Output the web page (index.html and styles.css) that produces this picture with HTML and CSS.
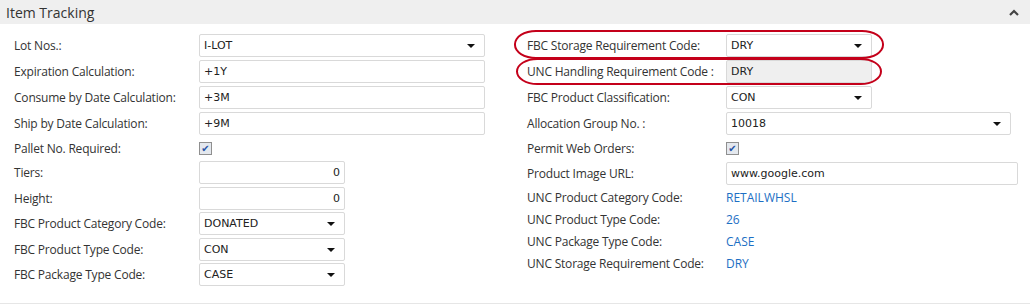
FILE: index.html
```html
<!DOCTYPE html>
<html lang="en">
<head>
    <meta charset="UTF-8">
    <meta name="viewport" content="width=device-width, initial-scale=1.0">
    <title>Item Tracking</title>
    <link rel="stylesheet" href="styles.css">
</head>
<body>
    <div class="panel">
        <div class="panel-header">
            <span class="panel-title">Item Tracking</span>
            <svg class="collapse" width="10" height="7" viewBox="0 0 10 7">
                <path d="M1 6 L5 2 L9 6" fill="none" stroke="#444" stroke-width="2.2"/>
            </svg>
        </div>
        <div class="panel-body">
            <div class="col left">
                <div class="row">
                    <span class="label">Lot Nos.:</span>
                    <div class="field wide select">I-LOT<span class="arrow"></span></div>
                </div>
                <div class="row">
                    <span class="label">Expiration Calculation:</span>
                    <div class="field wide">+1Y</div>
                </div>
                <div class="row">
                    <span class="label">Consume by Date Calculation:</span>
                    <div class="field wide">+3M</div>
                </div>
                <div class="row">
                    <span class="label">Ship by Date Calculation:</span>
                    <div class="field wide">+9M</div>
                </div>
                <div class="row check">
                    <span class="label">Pallet No. Required:</span>
                    <span class="checkbox">&#10004;</span>
                </div>
                <div class="row">
                    <span class="label">Tiers:</span>
                    <div class="field short number">0</div>
                </div>
                <div class="row">
                    <span class="label">Height:</span>
                    <div class="field short number">0</div>
                </div>
                <div class="row">
                    <span class="label">FBC Product Category Code:</span>
                    <div class="field short select">DONATED<span class="arrow"></span></div>
                </div>
                <div class="row">
                    <span class="label">FBC Product Type Code:</span>
                    <div class="field short select">CON<span class="arrow"></span></div>
                </div>
                <div class="row">
                    <span class="label">FBC Package Type Code:</span>
                    <div class="field short select">CASE<span class="arrow"></span></div>
                </div>
            </div>
            <div class="col right">
                <div class="row">
                    <span class="label">FBC Storage Requirement Code:</span>
                    <div class="field short select">DRY<span class="arrow"></span></div>
                </div>
                <div class="row">
                    <span class="label">UNC Handling Requirement Code :</span>
                    <div class="field short readonly">DRY</div>
                </div>
                <div class="row">
                    <span class="label">FBC Product Classification:</span>
                    <div class="field short select">CON<span class="arrow"></span></div>
                </div>
                <div class="row">
                    <span class="label">Allocation Group No. :</span>
                    <div class="field alloc select">10018<span class="arrow"></span></div>
                </div>
                <div class="row check">
                    <span class="label">Permit Web Orders:</span>
                    <span class="checkbox">&#10004;</span>
                </div>
                <div class="row">
                    <span class="label">Product Image URL:</span>
                    <div class="field url">www.google.com</div>
                </div>
                <div class="row text">
                    <span class="label">UNC Product Category Code:</span>
                    <span class="link">RETAILWHSL</span>
                </div>
                <div class="row text">
                    <span class="label">UNC Product Type Code:</span>
                    <span class="link">26</span>
                </div>
                <div class="row text">
                    <span class="label">UNC Package Type Code:</span>
                    <span class="link">CASE</span>
                </div>
                <div class="row text">
                    <span class="label">UNC Storage Requirement Code:</span>
                    <span class="link">DRY</span>
                </div>
            </div>
            <div class="mark mark-one"></div>
            <div class="mark mark-two"></div>
        </div>
    </div>
</body>
</html>
```

FILE: styles.css
```css
body {
    margin: 0;
    background-color: #fff;
    font-family: "Open Sans", "Noto Sans", sans-serif;
    color: #333;
}

.panel {
    width: 1030px;
    height: 303px;
    border-bottom: 1px solid #e6e6e6;
}

.panel-header {
    display: flex;
    justify-content: space-between;
    align-items: center;
    height: 24px;
    padding: 0 11px 0 6px;
    background-color: #efefef;
}

.panel-title {
    font-size: 14px;
    color: #333;
}

.collapse {
    margin-top: 1px;
}

.panel-body {
    position: relative;
    display: grid;
    grid-template-columns: 527px 1fr;
    padding-top: 8px;
}

.col.left {
    padding-left: 14px;
}

.row {
    display: flex;
    align-items: center;
    height: 26px;
}

.row.check {
    height: 24px;
}

.left .check ~ .row {
    height: 25.5px;
}

.row.text {
    height: 22px;
}

.label {
    flex: none;
    font-size: 12px;
    letter-spacing: -0.2px;
    color: #333;
}

.left .label {
    width: 185px;
}

.right .label {
    width: 199px;
}

.field {
    position: relative;
    box-sizing: border-box;
    height: 23px;
    padding: 0 4px;
    border: 1px solid #d9d9d9;
    border-radius: 2px;
    background-color: #fff;
    font-family: "DejaVu Sans", Tahoma, sans-serif;
    font-size: 11px;
    line-height: 21px;
    color: #222;
}

.field.wide {
    width: 286px;
}

.field.short {
    width: 146px;
}

.field.alloc {
    width: 285px;
}

.field.url {
    width: 292px;
}

.field.number {
    text-align: right;
}

.field.readonly {
    background-color: #efefef;
}

.arrow {
    position: absolute;
    right: 9px;
    top: 9px;
    width: 0;
    height: 0;
    border-left: 4px solid transparent;
    border-right: 4px solid transparent;
    border-top: 4px solid #111;
}

.checkbox {
    box-sizing: border-box;
    width: 13px;
    height: 13px;
    border: 1px solid #8f8f8f;
    background-color: #e4e8ee;
    color: #2553a6;
    font-size: 10px;
    font-weight: bold;
    line-height: 11px;
    text-align: center;
    font-family: "DejaVu Sans", sans-serif;
}

.link {
    font-size: 12px;
    color: #1d6fc4;
}

.mark {
    position: absolute;
    box-sizing: border-box;
    border: 2px solid #c4001a;
    border-radius: 22px / 14px;
}

.mark-one {
    left: 514px;
    top: 6px;
    width: 370px;
    height: 29px;
}

.mark-two {
    left: 516px;
    top: 34px;
    width: 366px;
    height: 27px;
}
```
